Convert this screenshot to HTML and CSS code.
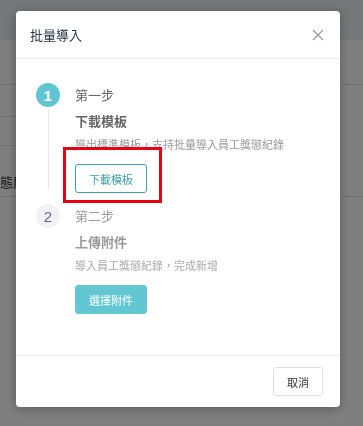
FILE: index.html
```html
<!DOCTYPE html>
<html lang="zh-Hant">

<head>
  <meta charset="UTF-8">
  <meta name="viewport" content="width=device-width, initial-scale=1.0">
  <title>批量導入</title>
  <link rel="stylesheet" href="styles.css">
</head>

<body>
  <div class="page">
    <div class="topbar"></div>
    <div class="row row-head"></div>
    <div class="row-group">
      <div class="side-col">
        <div class="cell"></div>
        <div class="cell"></div>
        <div class="cell cell-text">態度</div>
      </div>
    </div>
  </div>

  <div class="overlay">
    <div class="modal">
      <div class="modal-header">
        <span class="modal-title">批量導入</span>
        <svg class="close" width="12" height="12" viewBox="0 0 12 12">
          <path d="M1 1 L11 11 M11 1 L1 11" stroke="#909399" stroke-width="1.1" fill="none" />
        </svg>
      </div>

      <div class="modal-body">
        <div class="step step-active">
          <div class="step-rail">
            <div class="step-icon">1</div>
            <div class="step-line"></div>
          </div>
          <div class="step-main">
            <div class="step-head">第一步</div>
            <div class="step-title">下載模板</div>
            <div class="step-desc">導出標準模板，支持批量導入員工獎懲紀錄</div>
            <button class="btn btn-outline">下載模板</button>
          </div>
        </div>

        <div class="step step-wait">
          <div class="step-rail">
            <div class="step-icon">2</div>
          </div>
          <div class="step-main">
            <div class="step-head">第二步</div>
            <div class="step-title">上傳附件</div>
            <div class="step-desc">導入員工獎懲紀錄，完成新增</div>
            <button class="btn btn-fill">選擇附件</button>
          </div>
        </div>
      </div>

      <div class="modal-footer">
        <button class="btn btn-plain">取消</button>
      </div>

      <div class="mark"></div>
    </div>
  </div>
</body>

</html>
```

FILE: styles.css
```css
* {
  box-sizing: border-box;
  margin: 0;
  padding: 0;
  font-family: "Noto Sans CJK TC", "Liberation Sans", sans-serif;
}

body {
  background: #fff;
  color: #333;
}

/* page under the dialog */
.topbar {
  height: 40px;
  background: #eceef1;
}

.row-head {
  height: 45px;
  border-bottom: 1px solid #e4e4e4;
}

.row-group {
  height: 112px;
  border-bottom: 1px solid #e4e4e4;
}

.side-col {
  width: 60px;
}

.cell {
  height: 32px;
  border-bottom: 1px solid #e4e4e4;
}

.cell:nth-child(2) {
  height: 29px;
}

.cell-text {
  height: auto;
  border: none;
  padding: 27px 0 0;
  font-size: 13px;
  line-height: 18px;
  color: #222;
}

/* dialog */
.overlay {
  position: fixed;
  inset: 0;
  background: rgba(0, 0, 0, 0.5);
}

.modal {
  position: relative;
  width: 324px;
  margin: 11px 0 0 16px;
  background: #fff;
  border-radius: 4px;
  box-shadow: 0 2px 12px rgba(0, 0, 0, 0.3);
}

.modal-header {
  height: 48px;
  padding: 0 16px 0 14px;
  display: flex;
  align-items: center;
  justify-content: space-between;
  border-bottom: 1px solid #e8e8e8;
}

.modal-title {
  font-size: 13px;
  color: #1f2d3d;
}

.modal-body {
  padding: 24px 20px 41px 20px;
}

.step {
  display: flex;
  gap: 15px;
}

.step-rail {
  width: 24px;
  display: flex;
  flex-direction: column;
  align-items: center;
}

.step-icon {
  width: 24px;
  height: 24px;
  border-radius: 50%;
  display: flex;
  align-items: center;
  justify-content: center;
  font-family: "Liberation Sans", sans-serif;
  font-size: 15px;
}

.step-active .step-icon {
  background: #5fc6d1;
  color: #fff;
  font-weight: bold;
}

.step-wait .step-icon {
  background: #f0f2f5;
  color: #5c6b83;
}

.step-line {
  flex: 1;
  width: 1px;
  background: #e4e7ed;
  margin: 2px 0 4px;
}

.step-active {
  padding-bottom: 11px;
}

.step-head {
  font-size: 13px;
  line-height: 24px;
}

.step-title {
  font-size: 13px;
  font-weight: bold;
  line-height: 20px;
  margin-top: 4px;
}

.step-desc {
  font-size: 11px;
  line-height: 18px;
  margin-top: 4px;
}

.step-active .step-head,
.step-active .step-title {
  color: #666;
}

.step-active .step-desc {
  color: #999;
}

.step-wait .step-head,
.step-wait .step-title {
  color: #9a9a9a;
}

.step-wait .step-desc {
  color: #aaa;
}

.btn {
  display: block;
  height: 29px;
  border-radius: 3px;
  font-size: 11px;
  cursor: pointer;
  margin-top: 11px;
}

.btn-outline {
  width: 72px;
  background: #fff;
  border: 1px solid #3ba4af;
  color: #3ba1ad;
}

.btn-fill {
  width: 72px;
  background: #62c7d2;
  border: 1px solid #62c7d2;
  color: #fff;
}

.modal-footer {
  border-top: 1px solid #e8e8e8;
  padding: 11px 17px 11px;
  display: flex;
  justify-content: flex-end;
}

.btn-plain {
  margin: 0;
  width: 50px;
  background: #fff;
  border: 1px solid #dcdfe6;
  color: #333;
}

/* red annotation frame */
.mark {
  position: absolute;
  left: 47px;
  top: 136px;
  width: 99px;
  height: 56px;
  border: 3px solid #e60012;
}
```
